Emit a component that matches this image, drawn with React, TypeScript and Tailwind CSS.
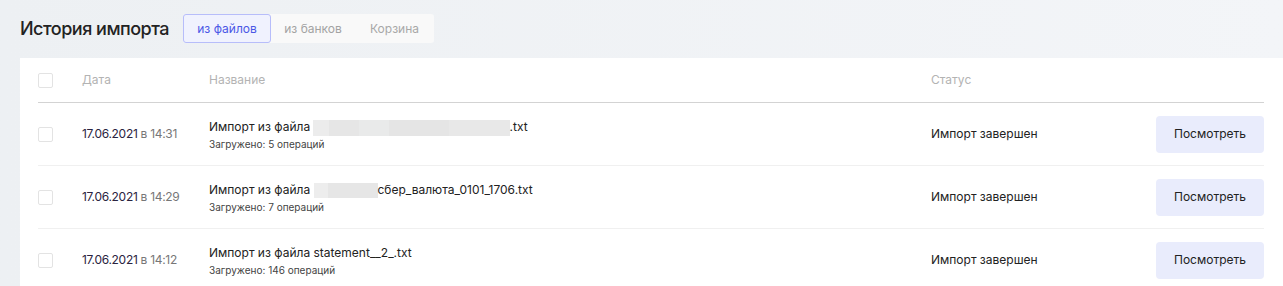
import React from "react";

const font = { fontFamily: "Inter, 'Noto Sans', sans-serif" };

function Checkbox() {
  return <div className="w-[15px] h-[15px] rounded-[2px] border border-[#e3e3e3] bg-white shrink-0" />;
}

type Row = { time: string; name: React.ReactNode; count: string };

const rows: Row[] = [
  {
    time: "14:31",
    name: (
      <>
        Импорт из файла{" "}
        <span className="inline-flex align-middle h-[16px] w-[197px] -ml-[1px]">
          <span className="h-full w-[16px] bg-[#ececec]" />
          <span className="h-full w-[30px] bg-[#e6e6e6]" />
          <span className="h-full w-[30px] bg-[#e9eaea]" />
          <span className="h-full w-[60px] bg-[#e5e5e5]" />
          <span className="h-full w-[61px] bg-[#e8e8e8]" />
        </span>
        .txt
      </>
    ),
    count: "Загружено: 5 операций",
  },
  {
    time: "14:29",
    name: (
      <>
        Импорт из файла{" "}
        <span className="inline-flex align-middle h-[15px] w-[64px]">
          <span className="h-full w-[14px] bg-[#ededed]" />
          <span className="h-full w-[50px] bg-[#e6e6e6]" />
        </span>
        сбер_валюта_0101_1706.txt
      </>
    ),
    count: "Загружено: 7 операций",
  },
  {
    time: "14:12",
    name: <>Импорт из файла statement__2_.txt</>,
    count: "Загружено: 146 операций",
  },
];

export default function App() {
  return (
    <div
      className="w-[1283px] h-[286px] overflow-hidden bg-gradient-to-r from-[#edf0f3] to-[#f3f5f8] pl-[20px] pt-[14px]"
      style={font}
    >
      <div className="flex items-center h-[29px]">
        <h1 className="text-[18px] font-medium text-[#222] tracking-[-0.5px] leading-none">История импорта</h1>
        <div className="ml-[14px] flex h-[29px] bg-[#f9f9f9] rounded-[3px]">
          <div className="w-[88px] h-full flex items-center justify-center rounded-[3px] border border-[#b7bdfa] bg-[#f0f2fe] text-[#4a57e6] text-[12px]">
            из файлов
          </div>
          <div className="w-[84px] h-full flex items-center justify-center text-[#a3a3a3] text-[12px]">
            из банков
          </div>
          <div className="w-[79px] h-full flex items-center justify-center text-[#a8a8a8] text-[12px]">
            Корзина
          </div>
        </div>
      </div>

      <div className="mt-[15px] bg-white h-[300px] pl-[18px] pr-[19px]">
        <div className="flex items-center h-[45px] border-b border-[#d3d3d3] text-[12px] text-[#b3b3b3]">
          <Checkbox />
          <div className="ml-[29px] w-[127px]">Дата</div>
          <div className="w-[722px]">Название</div>
          <div>Статус</div>
        </div>
        {rows.map((r, i) => (
          <div key={i} className="flex items-center h-[63px] border-b border-[#f0f0f0]">
            <Checkbox />
            <div className="ml-[29px] w-[127px] text-[12px] tracking-[-0.3px]">
              <span className="text-[#2a2340]">17.06.2021</span>{" "}
              <span className="text-[#777]">в {r.time}</span>
            </div>
            <div className="w-[722px] flex flex-col">
              <div className="text-[12px] text-[#222] leading-[18px] mt-[1px]">{r.name}</div>
              <div className="text-[10px] text-[#444] leading-[14px] mt-[1px]">{r.count}</div>
            </div>
            <div className="flex-1 text-[12px] text-[#222]">Импорт завершен</div>
            <button className="w-[108px] h-[37px] rounded-[4px] bg-[#e9ecfc] text-[12px] text-[#222]">
              Посмотреть
            </button>
          </div>
        ))}
      </div>
    </div>
  );
}
